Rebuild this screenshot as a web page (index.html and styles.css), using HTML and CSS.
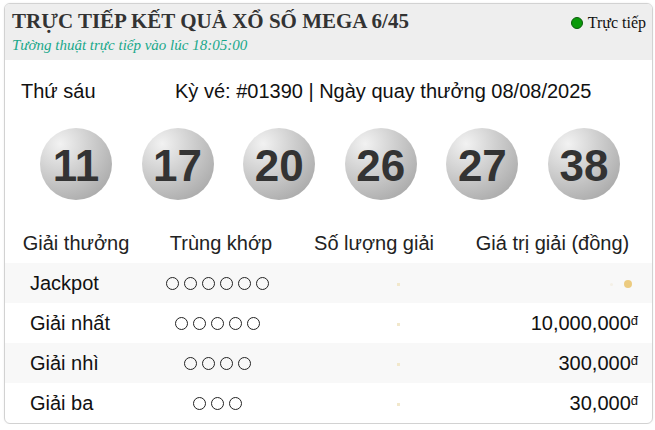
FILE: index.html
```html
<!DOCTYPE html>
<html lang="vi">

<head>
  <meta charset="UTF-8" />
  <meta name="viewport" content="width=device-width, initial-scale=1.0" />
  <title>Trực tiếp Mega 6/45</title>
  <link rel="stylesheet" href="styles.css">
</head>

<body>
  <div class="card">
    <div class="card-head">
      <div>
        <h1>TRỰC TIẾP KẾT QUẢ XỔ SỐ MEGA 6/45</h1>
        <div class="subtitle">Tường thuật trực tiếp vào lúc 18:05:00</div>
      </div>
      <div class="live"><span class="live-dot"></span>Trực tiếp</div>
    </div>

    <div class="info">
      <span>Thứ sáu</span>
      <span>Kỳ vé: #01390 | Ngày quay thưởng 08/08/2025</span>
    </div>

    <div class="balls">
      <div class="ball">11</div>
      <div class="ball">17</div>
      <div class="ball">20</div>
      <div class="ball">26</div>
      <div class="ball">27</div>
      <div class="ball">38</div>
    </div>

    <div class="prizes">
      <div class="row head">
        <div>Giải thưởng</div>
        <div>Trùng khớp</div>
        <div>Số lượng giải</div>
        <div>Giá trị giải (đồng)</div>
      </div>
      <div class="row alt">
        <div class="name">Jackpot</div>
        <div class="match"><i></i><i></i><i></i><i></i><i></i><i></i></div>
        <div class="qty"><span class="loading"></span></div>
        <div class="value"><span class="faint"></span><span class="pending"></span></div>
      </div>
      <div class="row">
        <div class="name">Giải nhất</div>
        <div class="match"><i></i><i></i><i></i><i></i><i></i></div>
        <div class="qty"><span class="loading"></span></div>
        <div class="value">10,000,000<sup>đ</sup></div>
      </div>
      <div class="row alt">
        <div class="name">Giải nhì</div>
        <div class="match"><i></i><i></i><i></i><i></i></div>
        <div class="qty"><span class="loading"></span></div>
        <div class="value">300,000<sup>đ</sup></div>
      </div>
      <div class="row">
        <div class="name">Giải ba</div>
        <div class="match"><i></i><i></i><i></i></div>
        <div class="qty"><span class="loading"></span></div>
        <div class="value">30,000<sup>đ</sup></div>
      </div>
    </div>
  </div>
</body>

</html>
```

FILE: styles.css
```css
body {
  margin: 0;
  padding: 0;
  font-family: 'Liberation Sans', Arial, sans-serif;
  background-color: #fff;
  color: #111;
}

.card {
  margin: 3px 2px 0 4px;
  border: 1px solid #d2d2d2;
  border-radius: 6px;
  overflow: hidden;
  box-shadow: 0 0 2px rgba(0, 0, 0, 0.08);
}

.card-head {
  display: flex;
  justify-content: space-between;
  align-items: flex-start;
  padding: 5px 6px 6px 7px;
  background: #eeeeee;
  font-family: 'Liberation Serif', 'Times New Roman', serif;
}

.card-head h1 {
  margin: 0;
  font-size: 21px;
  line-height: 24px;
  color: #333;
}

.subtitle {
  margin-top: 3px;
  font-size: 15px;
  line-height: 18px;
  font-style: italic;
  color: #19a88a;
}

.live {
  display: flex;
  align-items: center;
  padding-top: 2px;
  font-size: 16px;
  line-height: 24px;
  color: #111;
}

.live-dot {
  width: 10px;
  height: 10px;
  margin-right: 5px;
  border: 1px solid #0b5e0b;
  border-radius: 50%;
  background: #0a9a0a;
}

.info {
  display: grid;
  grid-template-columns: 154px 1fr;
  margin-top: 20px;
  padding-left: 16px;
  font-size: 20px;
  line-height: 23px;
}

.balls {
  display: flex;
  gap: 29.6px;
  margin-top: 25px;
  padding-left: 35px;
}

.ball {
  width: 72px;
  height: 72px;
  border-radius: 50%;
  background: radial-gradient(circle at 28% 22%, #f2f2f2 0%, #cdcdcd 42%, #9c9c9c 100%);
  color: #333;
  font-size: 44px;
  font-weight: bold;
  line-height: 72px;
  text-align: center;
  padding-top: 2px;
  box-sizing: border-box;
}

.prizes {
  margin-top: 23px;
}

.row {
  display: grid;
  grid-template-columns: 142px 148px 158px 1fr;
  align-items: center;
  height: 40px;
  font-size: 20px;
}

.row.head {
  text-align: center;
  color: #222;
}

.row.alt {
  background: #f8f8f8;
}

.name {
  padding-left: 25px;
}

.match {
  display: flex;
  justify-content: center;
  gap: 5px;
  padding-right: 8px;
}

.match i {
  width: 11px;
  height: 11px;
  border: 1.3px solid #222;
  border-radius: 50%;
}

.qty {
  text-align: center;
  padding-left: 48px;
}

.loading {
  display: inline-block;
  width: 3px;
  height: 3px;
  background: #f2e8cc;
  vertical-align: middle;
}

.value {
  text-align: right;
  padding-right: 14px;
}

.value sup {
  font-size: 13px;
  vertical-align: 5px;
  line-height: 0;
}

.faint {
  display: inline-block;
  width: 3px;
  height: 3px;
  margin-right: 11px;
  border-radius: 50%;
  background: #f4f0e6;
  vertical-align: middle;
}

.pending {
  display: inline-block;
  width: 8px;
  height: 8px;
  margin-right: 6px;
  border-radius: 50%;
  background: #eccb80;
  vertical-align: middle;
}
```
